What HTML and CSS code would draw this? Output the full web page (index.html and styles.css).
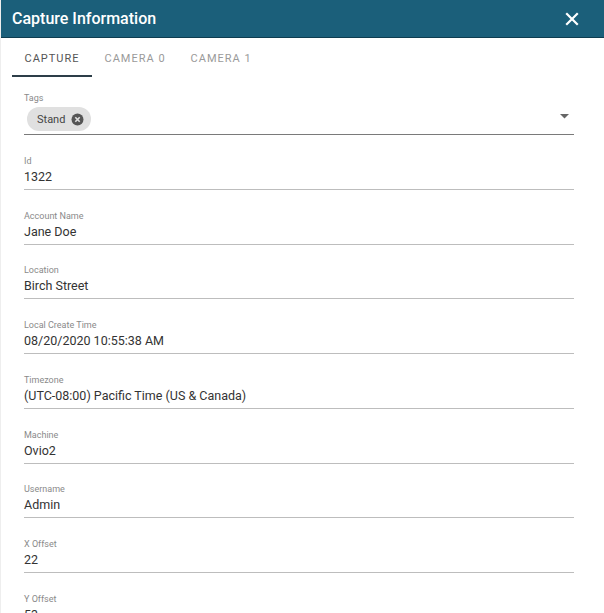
FILE: index.html
```html
<!DOCTYPE html>
<html>
<head>
<meta charset="utf-8">
<link rel="stylesheet" href="styles.css">
</head>
<body>
<div class="dialog">
  <header class="titlebar">
    <h1 class="title">Capture Information</h1>
    <button class="close" aria-label="Close">
      <svg width="14" height="14" viewBox="0 0 14 14"><path d="M2 2 L12 12 M12 2 L2 12" stroke="#fff" stroke-width="2.2" stroke-linecap="square"/></svg>
    </button>
  </header>
  <nav class="tabs">
    <div class="tab active">CAPTURE</div>
    <div class="tab">CAMERA 0</div>
    <div class="tab">CAMERA 1</div>
  </nav>
  <main class="content">
    <div class="field tags">
      <div class="label">Tags</div>
      <div class="tag-row">
        <span class="chip">Stand
          <svg class="chip-x" width="13" height="13" viewBox="0 0 13 13"><circle cx="6.5" cy="6.5" r="6" fill="#555"/><path d="M4.3 4.3 L8.7 8.7 M8.7 4.3 L4.3 8.7" stroke="#e0e0e0" stroke-width="1.6"/></svg>
        </span>
        <svg class="caret" width="9" height="5" viewBox="0 0 9 5"><path d="M0 0 L9 0 L4.5 4.5 Z" fill="#666"/></svg>
      </div>
    </div>
    <div class="field"><div class="label">Id</div><div class="value">1322</div></div>
    <div class="field"><div class="label">Account Name</div><div class="value">Jane Doe</div></div>
    <div class="field"><div class="label">Location</div><div class="value">Birch Street</div></div>
    <div class="field"><div class="label">Local Create Time</div><div class="value">08/20/2020 10:55:38 AM</div></div>
    <div class="field"><div class="label">Timezone</div><div class="value">(UTC-08:00) Pacific Time (US &amp; Canada)</div></div>
    <div class="field"><div class="label">Machine</div><div class="value">Ovio2</div></div>
    <div class="field"><div class="label">Username</div><div class="value">Admin</div></div>
    <div class="field"><div class="label">X Offset</div><div class="value">22</div></div>
    <div class="field"><div class="label">Y Offset</div><div class="value">53</div></div>
  </main>
</div>
</body>
</html>
```
FILE: styles.css
```css
html, body {
  margin: 0;
  padding: 0;
  background: #fff;
  overflow: hidden;
}
body {
  font-family: Roboto, "Liberation Sans", sans-serif;
  color: #333;
}
.dialog {
  width: 604px;
  height: 613px;
  overflow: hidden;
  border-left: 1px solid #eee;
  box-sizing: border-box;
}
.titlebar {
  height: 37px;
  background: #1b5f7a;
  border-bottom: 1px solid #0e3d50;
  display: flex;
  align-items: center;
  justify-content: space-between;
  padding: 0 25px 0 11px;
}
.title {
  margin: 0;
  font-size: 16px;
  font-weight: 500;
  color: #fff;
  letter-spacing: 0;
}
.close {
  background: none;
  border: 0;
  padding: 0;
  width: 14px;
  height: 14px;
  display: flex;
}
.tabs {
  display: flex;
  padding-left: 11px;
  height: 38px;
}
.tab {
  padding: 3px 12.5px 0;
  font-size: 11px;
  letter-spacing: 1px;
  color: #9a9a9a;
  display: flex;
  align-items: center;
  border-bottom: 2px solid transparent;
  height: 34px;
}
.tab.active {
  color: #555;
  border-bottom-color: #2d3e48;
}
.content {
  padding: 16px 30px 0 23px;
}
.field {
  border-bottom: 1px solid #bdbdbd;
  margin-bottom: 19.75px;
  padding-bottom: 3px;
}
.label {
  font-size: 9px;
  line-height: 12px;
  color: #8a8a8a;
}
.value {
  margin-top: 1px;
  font-size: 12.5px;
  line-height: 18px;
  color: #333;
}
.field.tags {
  border-bottom: 1px solid #7a7a7a;
  padding-bottom: 3px;
}
.tag-row {
  display: flex;
  align-items: center;
  justify-content: space-between;
  margin-top: 3px;
  padding-left: 3px;
}
.chip {
  display: inline-flex;
  align-items: center;
  gap: 6px;
  height: 24px;
  padding: 0 7px 0 10px;
  border-radius: 12px;
  background: #e0e0e0;
  font-size: 11px;
  color: #444;
}
.caret {
  margin-right: 5px;
  margin-bottom: 6px;
}
```
